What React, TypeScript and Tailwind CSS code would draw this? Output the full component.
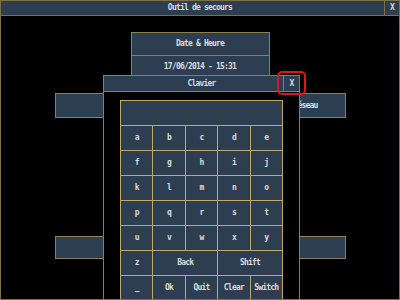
import React from 'react';

const panel = 'bg-[#2d3e50]';
const font = { fontFamily: '"DejaVu Sans Mono", "Liberation Mono", monospace' };

const rows: string[][] = [
  ['a', 'b', 'c', 'd', 'e'],
  ['f', 'g', 'h', 'i', 'j'],
  ['k', 'l', 'm', 'n', 'o'],
  ['p', 'q', 'r', 's', 't'],
  ['u', 'v', 'w', 'x', 'y'],
];

function Key({ label, span }: { label: string; span?: boolean }) {
  return (
    <div
      className={`${panel} h-[24px] flex items-center justify-center text-[#dcdcdc] ${span ? 'col-span-2' : ''}`}
    >
      {label}
    </div>
  );
}

function Keyboard() {
  return (
    <div className="w-[163px] grid grid-cols-5 gap-px p-px bg-[#bcaa6c]">
      <div className={`${panel} col-span-5 h-[24px]`} />
      {rows.map(r => r.map(k => <Key key={k} label={k} />))}
      <Key label="z" />
      <Key label="Back" span />
      <Key label="Shift" span />
      <Key label="_" />
      <Key label="Ok" />
      <Key label="Quit" />
      <Key label="Clear" />
      <Key label="Switch" />
    </div>
  );
}

export default function App() {
  return (
    <div
      className="w-[400px] h-[300px] bg-black border border-[#7d7049] flex flex-col relative overflow-hidden text-[8px] font-bold tracking-[-0.8px] text-[#dcdcdc]"
      style={font}
    >
      <div className={`${panel} h-[15px] border-b border-[#7d7049] shrink-0 relative flex items-center justify-center`}>
        Outil de secours
        <div className={`${panel} absolute right-0 top-0 w-[15px] h-[14px] border-l border-[#7d7049] flex items-center justify-center`}>
          X
        </div>
      </div>

      <div className="flex flex-col items-center mt-[16px]">
        <div className={`${panel} w-[139px] h-[24px] border border-[#8c7f52] flex items-center justify-center`}>
          Date &amp; Heure
        </div>
        <div className={`${panel} w-[139px] h-[22px] border border-t-0 border-[#8c7f52] flex items-center justify-center`}>
          17/06/2014 - 15:31
        </div>
      </div>

      <div className="flex justify-between pl-[54px] pr-[53px] mt-[15px]">
        <div className={`${panel} w-[85px] h-[25px] border border-[#8c7f52]`} />
        <div className={`${panel} w-[85px] h-[25px] border border-[#8c7f52] flex items-center justify-center pl-[4px]`}>
          Réseau
        </div>
      </div>

      <div className="flex justify-between pl-[54px] pr-[53px] mt-[118px]">
        <div className={`${panel} w-[85px] h-[23px] border border-[#8c7f52]`} />
        <div className={`${panel} w-[85px] h-[23px] border border-[#8c7f52]`} />
      </div>

      <div className="absolute left-[102px] top-[74px] w-[197px] h-[226px] bg-black border-x border-t border-[#8c7f52] flex flex-col">
        <div className="h-[16px] border-b border-[#8c7f52] relative flex shrink-0">
          <div className={`${panel} flex-1 flex items-center justify-center`}>Clavier</div>
          <div className={`${panel} absolute right-0 top-0 w-[16px] h-[15px] border-l border-[#8c7f52] flex items-center justify-center`}>
            X
          </div>
          <div className="absolute left-[173px] top-[-5px] w-[29px] h-[24px] border-2 border-[#e0141c] rounded-[5px]" />
        </div>
        <div className="pl-[16px] pt-[8px]">
          <Keyboard />
        </div>
      </div>
    </div>
  );
}
